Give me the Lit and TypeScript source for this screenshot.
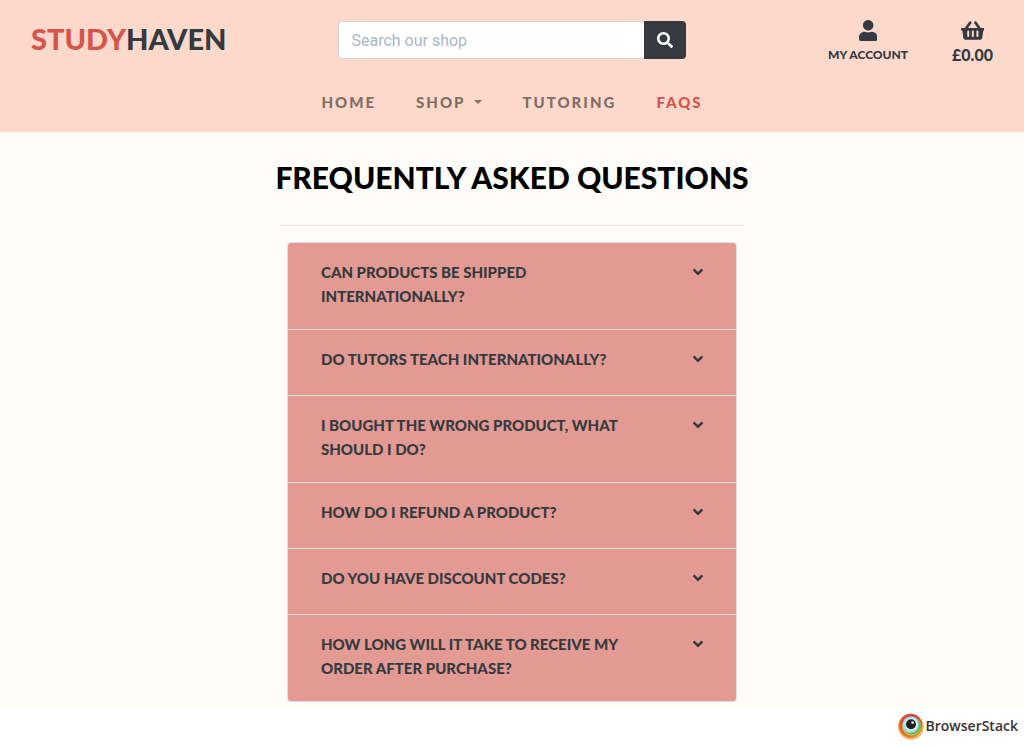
import { LitElement, html, css, svg } from "lit";
import { customElement, state } from "lit/decorators.js";

const SEARCH =
  "M505 442.7L405.3 343c-4.5-4.5-10.6-7-17-7H372c27.6-35.3 44-79.7 44-128C416 93.1 322.9 0 208 0S0 93.1 0 208s93.1 208 208 208c48.3 0 92.7-16.4 128-44v16.3c0 6.4 2.5 12.5 7 17l99.7 99.7c9.4 9.4 24.6 9.4 33.9 0l28.3-28.3c9.4-9.4 9.4-24.6.1-34zM208 336c-70.7 0-128-57.2-128-128 0-70.7 57.2-128 128-128 70.7 0 128 57.2 128 128 0 70.7-57.2 128-128 128z";
const USER =
  "M224 256c70.7 0 128-57.3 128-128S294.7 0 224 0 96 57.3 96 128s57.3 128 128 128zm89.6 32h-16.7c-22.2 10.2-46.9 16-72.9 16s-50.6-5.8-72.9-16h-16.7C60.2 288 0 348.2 0 422.4V464c0 26.5 21.5 48 48 48h352c26.5 0 48-21.5 48-48v-41.6c0-74.2-60.2-134.4-134.4-134.4z";
const BASKET =
  "M576 216v16c0 13.255-10.745 24-24 24h-8l-26.113 182.788C514.509 462.435 494.257 480 470.37 480H105.63c-23.887 0-44.139-17.565-47.518-41.212L32 256h-8c-13.255 0-24-10.745-24-24v-16c0-13.255 10.745-24 24-24h67.341l106.78-146.821c10.395-14.292 30.407-17.453 44.701-7.058 14.293 10.395 17.453 30.408 7.058 44.701L170.477 192h235.046L326.12 82.821c-10.395-14.292-7.234-34.306 7.059-44.701 14.291-10.395 34.306-7.235 44.701 7.058L484.659 192H552c13.255 0 24 10.745 24 24zM312 392V280c0-13.255-10.745-24-24-24s-24 10.745-24 24v112c0 13.255 10.745 24 24 24s24-10.745 24-24zm112 0V280c0-13.255-10.745-24-24-24s-24 10.745-24 24v112c0 13.255 10.745 24 24 24s24-10.745 24-24zm-224 0V280c0-13.255-10.745-24-24-24s-24 10.745-24 24v112c0 13.255 10.745 24 24 24s24-10.745 24-24z";
const ANGLE =
  "M143 352.3L7 216.3c-9.4-9.4-9.4-24.6 0-33.9l22.6-22.6c9.4-9.4 24.6-9.4 33.9 0l96.4 96.4 96.4-96.4c9.4-9.4 24.6-9.4 33.9 0l22.6 22.6c9.4 9.4 9.4 24.6 0 33.9l-136 136c-9.2 9.4-24.4 9.4-33.8 0z";

const icon = (path: string, width: number, size: number) => html`
  <svg viewBox="0 0 ${width} 512" width=${(width / 512) * size} height=${size} aria-hidden="true">
    ${svg`<path fill="currentColor" d=${path}></path>`}
  </svg>
`;

const FAQS: string[] = [
  "Can products be shipped internationally?",
  "Do tutors teach internationally?",
  "I bought the wrong product, what should I do?",
  "How do I refund a product?",
  "Do you have discount codes?",
  "How long will it take to receive my order after purchase?",
];

@customElement("site-header")
export class SiteHeader extends LitElement {
  static styles = css`
    :host {
      display: block;
      background: #fdd9cc;
      color: #343a40;
      font-family: Lato, sans-serif;
      font-weight: 900;
      text-transform: uppercase;
    }
    svg {
      display: block;
    }
    a {
      color: inherit;
      text-decoration: none;
    }
    .bar {
      display: grid;
      grid-template-columns: 1fr 34% 1fr;
      align-items: start;
      padding: 20px 31px 0;
      height: 70px;
      box-sizing: border-box;
    }
    .logo {
      font-size: 29px;
      line-height: 38px;
    }
    .logo-accent {
      color: #d6544b;
    }
    .search {
      display: flex;
      height: 38px;
      margin: 1px -10px 0;
    }
    .search-input {
      flex: 1;
      min-width: 0;
      box-sizing: border-box;
      padding: 0 12px;
      border: 1px solid #ced4da;
      border-right: 0;
      border-radius: 4px;
      background: #fff;
      color: #495057;
      font: 400 16px Roboto, sans-serif;
    }
    .search-input::placeholder {
      color: #aab7c4;
      opacity: 1;
    }
    .search-button {
      display: grid;
      place-items: center;
      width: 42px;
      padding: 0;
      border: 0;
      border-radius: 0 4px 4px 0;
      background: #343a40;
      color: #fff;
    }
    .tools {
      display: flex;
      justify-content: flex-end;
      gap: 44px;
    }
    .tool {
      display: flex;
      flex-direction: column;
      align-items: center;
      gap: 2px;
      line-height: 24px;
    }
    .account {
      font-size: 12px;
    }
    .total {
      font-size: 16px;
    }
    .nav {
      display: flex;
      justify-content: center;
      gap: 40px;
      padding: 20px 0 18px;
      font-size: 15px;
      line-height: 24px;
      letter-spacing: 2px;
      color: #816e66;
    }
    .drop {
      display: flex;
      align-items: center;
      gap: 9px;
    }
    .caret {
      border: 4px solid transparent;
      border-top-color: currentColor;
      border-bottom: 0;
    }
    .active {
      color: #d6544b;
    }
  `;

  render() {
    return html`
      <div class="bar">
        <a class="logo" href="#"><span class="logo-accent">Study</span>Haven</a>
        <form class="search" role="search" @submit=${(e: Event) => e.preventDefault()}>
          <input class="search-input" type="search" aria-label="Search our shop" placeholder="Search our shop" />
          <button class="search-button" aria-label="Search">${icon(SEARCH, 512, 16)}</button>
        </form>
        <div class="tools">
          <a class="tool account" href="#">${icon(USER, 448, 21)}<span>My Account</span></a>
          <a class="tool total" href="#">${icon(BASKET, 576, 21)}<span>£0.00</span></a>
        </div>
      </div>
      <nav class="nav" aria-label="Main">
        <a href="#">Home</a>
        <a class="drop" href="#">Shop<span class="caret"></span></a>
        <a href="#">Tutoring</a>
        <a class="active" href="#" aria-current="page">FAQs</a>
      </nav>
    `;
  }
}

@customElement("faq-list")
export class FaqList extends LitElement {
  @state() private open = -1;

  static styles = css`
    :host {
      display: block;
      border: 1px solid #dfdfdf;
      border-radius: 4px;
      overflow: hidden;
      background: #e39a93;
      font-family: Lato, sans-serif;
    }
    .item + .item {
      border-top: 1px solid #dfdfdf;
    }
    .heading {
      margin: 0;
    }
    .toggle {
      display: flex;
      justify-content: space-between;
      align-items: flex-start;
      gap: 64px;
      width: 100%;
      min-height: 65px;
      padding: 17px 33px 21px;
      border: 0;
      background: none;
      color: #343a40;
      font: 900 15px/24px Lato, sans-serif;
      text-align: left;
      text-transform: uppercase;
      cursor: pointer;
    }
    svg {
      display: block;
      flex: none;
      margin-top: 4px;
    }
  `;

  render() {
    return html`${FAQS.map(
      (question, i) => html`
        <div class="item">
          <h2 class="heading">
            <button
              class="toggle"
              aria-expanded=${this.open === i}
              @click=${() => (this.open = this.open === i ? -1 : i)}
            >
              <span>${question}</span>${icon(ANGLE, 320, 16)}
            </button>
          </h2>
        </div>
      `
    )}`;
  }
}

@customElement("app-root")
export class AppRoot extends LitElement {
  static styles = css`
    :host {
      display: block;
      background: #fff;
      font-family: Lato, sans-serif;
    }
    .main {
      display: flex;
      flex-direction: column;
      align-items: center;
      padding: 24px 16px 6px;
      background: #fffdf9;
    }
    .title {
      margin: 0;
      color: #000;
      font-size: 30px;
      font-weight: 900;
      line-height: 42px;
      text-align: center;
      text-transform: uppercase;
    }
    .rule {
      width: 100%;
      max-width: 464px;
      margin: 27px 0 16px;
      border: 0;
      border-top: 1px solid #e4e3e0;
    }
    .list {
      width: 100%;
      max-width: 448px;
    }
    .footer {
      display: flex;
      justify-content: flex-end;
      padding: 4px 6px;
    }
    .badge {
      display: flex;
      align-items: center;
      gap: 1px;
      color: #3b332f;
      font: 600 14px/28px "Open Sans", sans-serif;
      text-decoration: none;
    }
  `;

  render() {
    return html`
      <site-header></site-header>
      <main class="main">
        <h1 class="title">Frequently Asked Questions</h1>
        <hr class="rule" />
        <faq-list class="list"></faq-list>
      </main>
      <footer class="footer">
        <a class="badge" href="#">
          <svg viewBox="0 0 28 28" width="28" height="28" aria-hidden="true">
            <circle cx="14" cy="15" r="12.8" fill="#f4b960"></circle>
            <circle cx="13.4" cy="13.6" r="11.8" fill="#e66f32"></circle>
            <circle cx="14.2" cy="12.8" r="10.6" fill="#e43d41"></circle>
            <circle cx="14.6" cy="14.2" r="9.6" fill="#bfd04a"></circle>
            <circle cx="15" cy="13.6" r="8.8" fill="#6db64c"></circle>
            <circle cx="13.8" cy="12.6" r="8.2" fill="#9fdcf3"></circle>
            <circle cx="14.2" cy="12.4" r="6.4" fill="#d5f0f8"></circle>
            <circle cx="14" cy="12.2" r="5" fill="#231f20"></circle>
            <circle cx="15.6" cy="10.6" r="1.3" fill="#fff"></circle>
          </svg>
          BrowserStack
        </a>
      </footer>
    `;
  }
}
